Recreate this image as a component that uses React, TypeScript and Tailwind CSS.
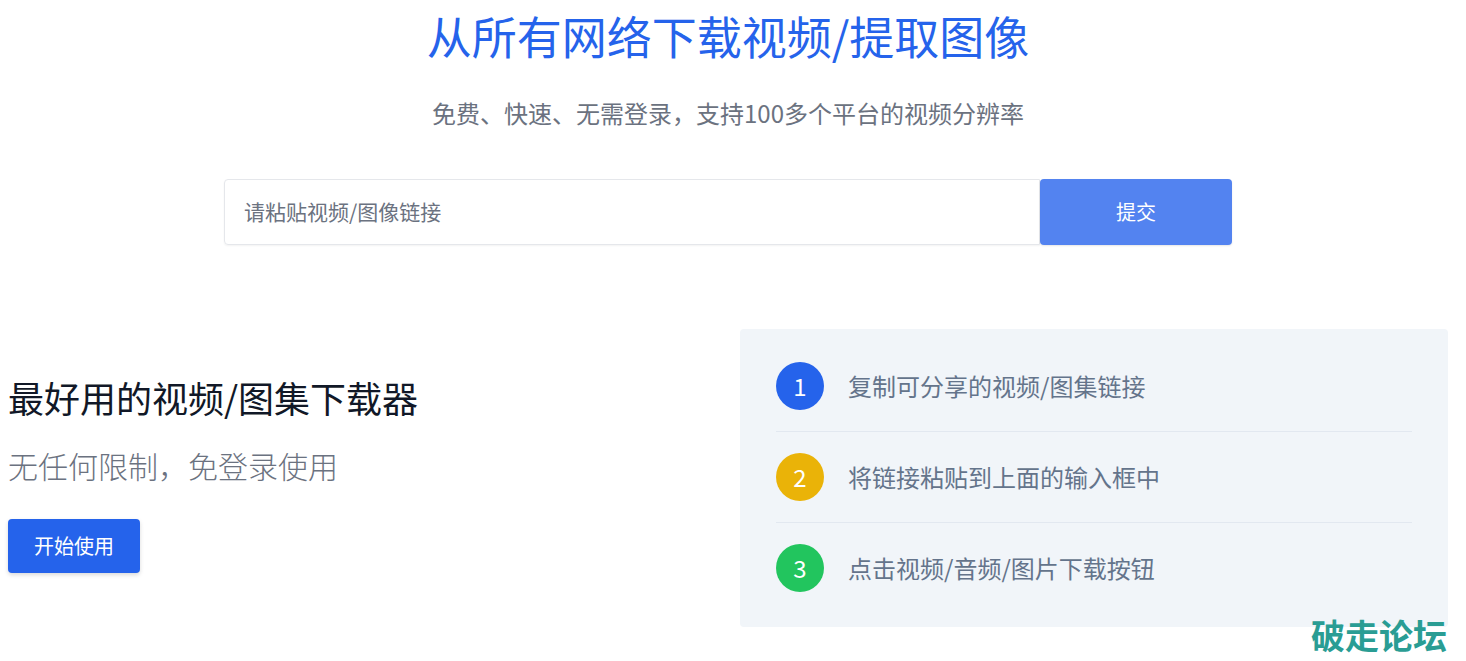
import React from "react";

const font = { fontFamily: '"Noto Sans CJK SC", "Noto Sans", sans-serif' };

const steps = [
  { n: "1", text: "复制可分享的视频/图集链接", color: "bg-[#2563eb]" },
  { n: "2", text: "将链接粘贴到上面的输入框中", color: "bg-[#eab308]" },
  { n: "3", text: "点击视频/音频/图片下载按钮", color: "bg-[#22c55e]" },
];

export default function App() {
  return (
    <div className="relative w-[1466px] h-[661px] overflow-hidden bg-white" style={font}>
      <div className="w-[1456px] flex flex-col items-center">
        <h1 className="mt-[13px] text-[45px] leading-none text-[#2563eb] font-normal">从所有网络下载视频/提取图像</h1>
        <p className="mt-[43px] text-[24px] leading-none text-[#6b7280]">免费、快速、无需登录，支持100多个平台的视频分辨率</p>
        <div className="mt-[54px] flex w-[1008px] h-[66px]">
          <div className="flex-1 flex items-center border border-[#e5e7eb] rounded-l-[4px] pl-[19px] shadow-[0_1px_2px_rgba(0,0,0,0.05)]">
            <span className="text-[21px] text-[#6b7280]">请粘贴视频/图像链接</span>
          </div>
          <button className="w-[192px] h-full bg-[#5383f0] text-white text-[20px] rounded-[4px] shadow-[0_1px_2px_rgba(0,0,0,0.1)]">提交</button>
        </div>
      </div>

      <div className="mt-[84px] ml-2 w-[1440px] grid grid-cols-2 gap-6 items-center">
        <div className="flex flex-col items-start pb-[4px]">
          <h2 className="text-[36px] leading-none text-[#111827] font-normal">最好用的视频/图集下载器</h2>
          <p className="mt-[35px] text-[30px] leading-none text-[#6b7280] font-light">无任何限制，免登录使用</p>
          <button className="mt-[39px] w-[132px] h-[54px] bg-[#2563eb] text-white text-[20px] rounded-[4px] shadow-[0_2px_4px_rgba(0,0,0,0.15)]">开始使用</button>
        </div>
        <div className="bg-[#f1f5f9] rounded-[4px] px-9 pt-[12px] pb-[14px]">
          {steps.map((s, i) => (
            <div key={s.n} className={`flex items-center gap-6 py-[21px] ${i < 2 ? "border-b border-[#e2e8f0]" : ""}`}>
              <div className={`w-12 h-12 rounded-full ${s.color} flex items-center justify-center text-white text-[24px]`}>{s.n}</div>
              <span className="text-[24px] text-[#64748b]">{s.text}</span>
            </div>
          ))}
        </div>
      </div>

      <div className="absolute left-[1311px] top-[618px] text-[34px] font-bold text-[#2a9d94] leading-none">破走论坛</div>
    </div>
  );
}
